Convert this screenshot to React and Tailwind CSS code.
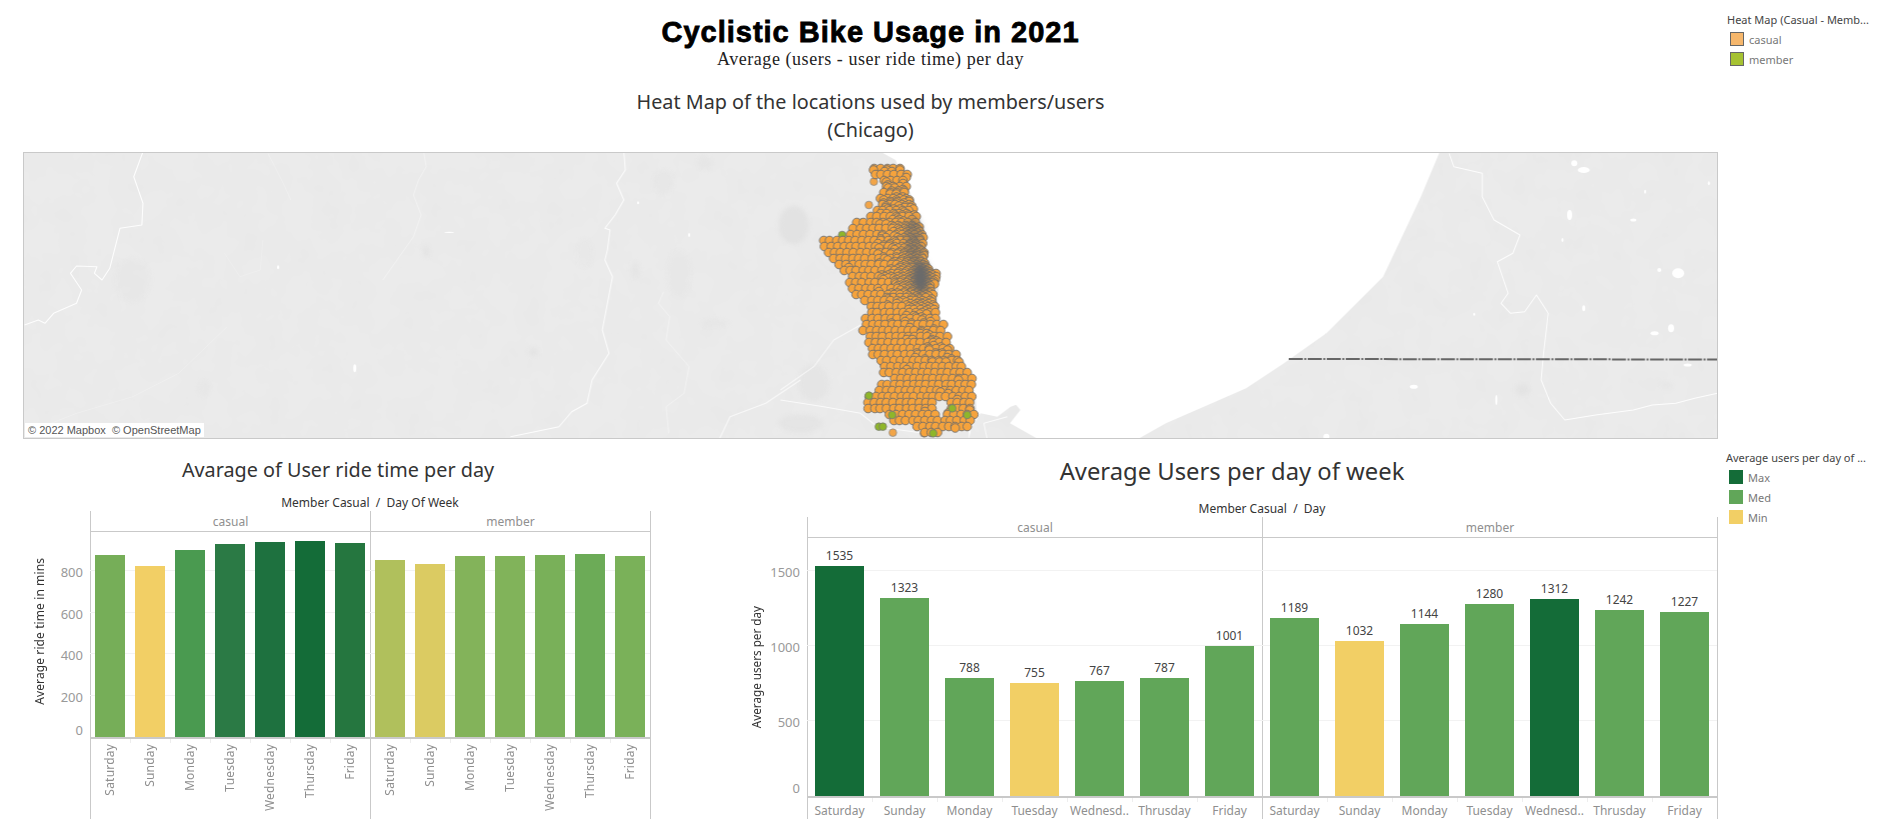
import React from "react";

const Z3 = (x, y) => [780 + x / 3, 150 + y / 3];
const Z7 = (x, y) => [x / 1.96, 140 + y / 3];
const Z8 = (x, y) => [1000 + x / 2.119, 140 + y / 3];
const pts = (f, a) => a.map(([x, y]) => f(x, y).map((n) => n.toFixed(1)).join(",")).join(" ");

const lake = [
  ...[[300, 5], [345, 30], [390, 130], [420, 230], [440, 340], [475, 400], [470, 470], [500, 560], [540, 640], [585, 740], [590, 800], [565, 835], [565, 868], [572, 835], [600, 790], [650, 800], [690, 770], [720, 760]].map(([x, y]) => Z3(x, y)),
  ...[[30, 790], [42, 810], [20, 850], [80, 898], [290, 898], [350, 850], [520, 745], [600, 670], [690, 580], [810, 410], [860, 260], [890, 170], [930, 35]].map(([x, y]) => Z8(x, y)),
];

const rivers = [
  [Z7, [[280, 35], [262, 110], [280, 190], [278, 255], [235, 265], [215, 385], [200, 420], [185, 400], [190, 380], [150, 378], [138, 400], [160, 450], [150, 490], [105, 520], [88, 550], [75, 540], [48, 555]], 1.1, 0.9],
  [Z7, [[1222, 35], [1225, 90], [1208, 130], [1222, 180], [1205, 225], [1185, 265], [1195, 270], [1190, 330], [1185, 360], [1200, 410], [1190, 490], [1180, 570], [1193, 640], [1160, 720], [1150, 790], [1120, 815], [1095, 860], [1000, 890]], 1, 0.9],
  [Z7, [[830, 35], [835, 80], [820, 120], [810, 165], [825, 225], [810, 290], [750, 420]], 0.7, 0.6],
  [Z7, [[525, 40], [555, 130], [570, 180]], 0.5, 0.5],
  [Z7, [[1300, 455], [1290, 490], [1312, 530], [1305, 600], [1350, 680], [1340, 760], [1305, 800], [1310, 880]], 0.7, 0.6],
  [Z7, [[445, 560], [350, 700], [260, 770], [150, 820], [100, 850]], 0.5, 0.45],
  [Z7, [[440, 340], [470, 410], [510, 390], [515, 300]], 0.5, 0.4],
  [Z7, [[1568, 720], [1500, 790], [1430, 830], [1410, 895]], 1.1, 0.7],
  [Z3, [[0, 720], [100, 650], [160, 570], [240, 525]], 1, 0.7],
  [Z3, [[0, 750], [130, 770], [240, 790], [290, 830], [430, 850]], 1, 0.75],
  [Z3, [[620, 868], [610, 820], [680, 800]], 1, 0.8],
  [Z8, [[950, 40], [960, 80], [1020, 100], [1020, 170], [1045, 240], [1100, 285], [1085, 340], [1052, 365], [1075, 460], [1060, 490], [1080, 520], [1110, 515], [1135, 465], [1160, 520], [1150, 640], [1145, 720], [1165, 790], [1195, 840], [1260, 825], [1340, 810], [1380, 795], [1430, 790], [1470, 775], [1518, 760]], 1, 0.9],
];

const spots = [
  [Z7, 545, 382, 1, 2], [Z7, 695, 685, 1.5, 4], [Z7, 1350, 285, 1, 2], [Z7, 880, 277, 5, 0.6], [Z7, 1250, 188, 1, 1.5],
  [Z8, 1205, 225, 2.5, 5], [Z8, 1235, 90, 6, 3], [Z8, 1215, 70, 3, 3], [Z8, 1435, 400, 6, 5], [Z8, 1395, 390, 2, 2],
  [Z8, 1385, 580, 4, 2], [Z8, 1420, 565, 3, 4], [Z8, 1235, 505, 1.5, 3], [Z8, 875, 740, 4, 2], [Z8, 1365, 155, 1, 2],
  [Z8, 1500, 130, 1, 2], [Z8, 1190, 300, 1, 2], [Z8, 1455, 675, 4, 1.5], [Z8, 1340, 240, 3, 1.5], [Z8, 1003, 523, 1, 1.5],
  [Z8, 690, 890, 3, 3], [Z8, 1050, 780, 1, 5],
];

const patches = [
  [Z3, 40, 225, 15, 19, 0.75], [Z7, 1300, 125, 10, 12, 0.35], [Z7, 1380, 70, 7, 7, 0.3], [Z7, 1245, 390, 4, 9, 0.4],
  [Z7, 400, 745, 6, 8, 0.25], [Z7, 1045, 635, 5, 4, 0.6], [Z7, 260, 420, 18, 22, 0.18], [Z7, 835, 335, 3, 6, 0.6],
  [Z7, 1400, 550, 14, 4, 0.25], [Z3, 100, 700, 15, 18, 0.5], [Z3, 60, 820, 22, 9, 0.5], [Z8, 1105, 750, 7, 6, 0.6],
  [Z8, 1410, 735, 6, 3, 0.35], [Z7, 1145, 340, 8, 15, 0.2], [Z7, 1330, 400, 12, 24, 0.18],
];

const shape = [[270, 45], [360, 45], [380, 70], [375, 130], [390, 150], [405, 190], [405, 225], [430, 240], [430, 300], [435, 350], [470, 370], [465, 400], [450, 420], [465, 470], [470, 500], [495, 530], [500, 580], [525, 610], [570, 680], [580, 740], [580, 810], [570, 840], [480, 840], [470, 855], [420, 855], [400, 825], [345, 825], [320, 790], [260, 790], [255, 750], [285, 710], [340, 680], [325, 670], [300, 670], [298, 640], [260, 610], [245, 550], [245, 510], [260, 460], [210, 440], [200, 370], [160, 350], [150, 320], [120, 300], [120, 270], [180, 265], [210, 235], [225, 215], [280, 195], [290, 165], [300, 130], [300, 90], [270, 90]].map(([x, y]) => Z3(x, y));

function inside(x, y) {
  let c = false;
  for (let i = 0, j = shape.length - 1; i < shape.length; j = i++) {
    const [xi, yi] = shape[i];
    const [xj, yj] = shape[j];
    if (yi > y !== yj > y && x < ((xj - xi) * (y - yi)) / (yj - yi) + xi) c = !c;
  }
  return c;
}

function buildDots() {
  let s = 20211;
  const rnd = () => {
    s = (s * 1664525 + 1013904223) >>> 0;
    return s / 4294967296;
  };
  const out = [];
  for (let i = 0, y = 168.5; y < 434; i++, y += 1.5) {
    const major = i % 4 === 0;
    for (let x = 815 + rnd() * 6; x < 980; x += 6.4) {
      if (!inside(x, y)) continue;
      const [zx, zy] = [(x - 780) * 3, (y - 150) * 3];
      if (zx > 462 && zx < 497 && zy > 745 && zy < 800) continue;
      const centre = zy * 0.07 + 365 + (zy > 400 ? (zy - 400) * 0.28 : 0);
      const d = Math.exp(-((zx - centre) ** 2) / (2 * 48 * 48));
      const band = zy < 140 ? 0.35 : zy < 480 ? 1 : zy < 640 ? 0.4 : 0.08;
      const near = Math.exp(-((zx - 415) ** 2 + (zy - 360) ** 2) / (2 * 55 * 55));
      if (major || rnd() < d * band * 0.7 + near) {
        out.push([x + rnd() * 1.4, y, 4.3]);
      }
    }
  }
  return out;
}

const dots = buildDots();
const greens = [[265, 737], [335, 795], [295, 830], [307, 830], [458, 850], [560, 795], [515, 775]].map(([x, y]) => Z3(x, y));
const greensBehind = [[243, 218], [185, 255]].map(([x, y]) => Z3(x, y));
const extras = [[337, 848], [265, 165], [280, 95], [430, 850], [310, 645], [310, 668]].map(([x, y]) => Z3(x, y));

function MapDrawing() {
  return (
    <svg viewBox="24 153 1692 285" preserveAspectRatio="none" className="block w-full h-full">
      <defs>
        <filter id="mottle" x="0" y="0" width="100%" height="100%">
          <feTurbulence type="fractalNoise" baseFrequency="0.035" numOctaves="3" seed="4" />
          <feColorMatrix values="0 0 0 0 0.78  0 0 0 0 0.78  0 0 0 0 0.78  0.6 0 0 0 -0.2" />
        </filter>
      </defs>
      <rect x="24" y="153" width="1692" height="285" fill="#ebebeb" />
      <rect x="24" y="153" width="1692" height="285" filter="url(#mottle)" />
      <g className="blur-[2px]">
        {patches.map(([f, x, y, rx, ry, o], i) => {
          const [cx, cy] = f(x, y);
          return <ellipse key={i} cx={cx} cy={cy} rx={rx} ry={ry} fill="#dfdfdf" opacity={o} />;
        })}
      </g>
      <g className="blur-[0.5px]">
        {rivers.map(([f, a, w, o], i) => (
          <polyline key={i} points={pts(f, a)} fill="none" stroke="#ffffff" strokeWidth={w} strokeLinejoin="round" opacity={o} />
        ))}
        {spots.map(([f, x, y, rx, ry], i) => {
          const [cx, cy] = f(x, y);
          return <ellipse key={i} cx={cx} cy={cy} rx={rx} ry={ry} fill="#ffffff" />;
        })}
      </g>
      <polygon points={lake.map((p) => p.map((n) => n.toFixed(1)).join(",")).join(" ")} fill="#ffffff" />
      <line x1="1288" y1="359" x2="1717" y2="359.5" stroke="#666666" strokeWidth="2" strokeDasharray="14 1.5 2 1.5" className="blur-[0.3px]" />
      <g className="blur-[0.45px]">
        {greensBehind.map(([x, y], i) => (
          <circle key={i} cx={x} cy={y} r="3.8" fill="#8fb62a" stroke="#777777" strokeWidth="0.8" />
        ))}
        {extras.map(([x, y], i) => (
          <circle key={i} cx={x} cy={y} r="3.8" fill="#f2a548" stroke="#8a8a8a" strokeWidth="0.8" />
        ))}
        {dots.map(([x, y, r], i) => (
          <circle key={i} cx={x.toFixed(1)} cy={y.toFixed(1)} r={r} fill="#f6a33c" stroke="#6c6c6c" strokeWidth="0.9" />
        ))}
        {greens.map(([x, y], i) => (
          <circle key={i} cx={x} cy={y} r="3.8" fill="#8fb62a" stroke="#777777" strokeWidth="0.8" />
        ))}
      </g>
      <g className="blur-[3px]">
        <ellipse cx="920" cy="277" rx="9" ry="16" fill="#6a6a6a" />
        <ellipse cx="913" cy="240" rx="8" ry="24" fill="#6a6a6a" opacity="0.55" />
      </g>
    </svg>
  );
}

const DAYS = ["Saturday", "Sunday", "Monday", "Tuesday", "Wednesday", "Thursday", "Friday"];
const LINE = "border-[#c9c9c9]";

function Panel({ name, bars, plotH, cellW, width, last, grid, renderLabel, labelArea }) {
  return (
    <div className={`flex flex-col border-l ${LINE} ${last ? "border-r" : ""}`} style={{ width }}>
      <div className={`h-[21px] shrink-0 border-b ${LINE} pt-[2px] flex items-center justify-center text-[12px] leading-none text-[#8f8f8f]`}>{name}</div>
      <div className="relative -ml-px" style={{ height: plotH, width: cellW * 7 }}>
        {grid.map((b) => (
          <div key={b} className="absolute left-0 right-0 h-px bg-[#f2f2f2]" style={{ bottom: b }} />
        ))}
        <div className="relative flex h-full items-end">
          {bars.map((b, i) => (
            <div key={i} className="flex flex-col items-center justify-end h-full" style={{ width: cellW }}>
              {renderLabel(b)}
              <div className="w-full" style={{ height: b.h, backgroundColor: b.c, width: b.w }} />
            </div>
          ))}
        </div>
      </div>
      <div className={`h-[2px] -ml-px bg-[#c9c9c9]`} style={{ width: cellW * 7 + (last ? 0 : 1) }} />
      {labelArea}
    </div>
  );
}

function Ticks({ ticks, height, title, offset, titleClass, shift }) {
  return (
    <div className="flex shrink-0" style={{ width: offset + 60 }}>
      <div style={{ width: offset }} />
      <div className="w-[60px] flex pt-[21px]">
        <div className="w-[20px] flex items-center justify-center" style={{ height }}>
          <span className={`[writing-mode:vertical-rl] rotate-180 whitespace-nowrap text-[#333333] ${titleClass}`}>{title}</span>
        </div>
        <div className="relative w-[40px]" style={{ height }}>
          {ticks.map(([label, b]) => (
            <span key={label} className="absolute right-[7px] translate-y-1/2 text-[13px] leading-none text-[#999999]" style={{ bottom: label === 0 ? b + 8 : b + shift }}>
              {label}
            </span>
          ))}
        </div>
      </div>
    </div>
  );
}

function SideLabels({ cellW }) {
  return (
    <div className="flex items-start -ml-px">
      {DAYS.map((d, i) => (
        <div key={d} className="relative flex items-start justify-center pt-[5px]" style={{ width: cellW }}>
          {i > 0 && <span className="absolute left-0 top-0 h-[4px] w-px bg-[#eeeeee]" />}
          <span className="[writing-mode:vertical-rl] rotate-180 text-[12px] leading-none tracking-[0.2px] text-[#8f8f8f] whitespace-nowrap">{d}</span>
        </div>
      ))}
    </div>
  );
}

function FlatLabels({ cellW }) {
  const names = ["Saturday", "Sunday", "Monday", "Tuesday", "Wednesd..", "Thrusday", "Friday"];
  return (
    <div className="flex -ml-px">
      {names.map((d, i) => (
        <div key={d} className="relative flex justify-center pt-[5px]" style={{ width: cellW }}>
          {i > 0 && <span className="absolute left-0 top-0 h-[4px] w-px bg-[#eeeeee]" />}
          <span className="text-[12px] leading-[16px] text-[#8f8f8f] whitespace-nowrap">{d}</span>
        </div>
      ))}
    </div>
  );
}

const leftCasual = [[182, "#76ae58"], [171, "#f2cf65"], [187, "#4a9a50"], [193, "#2b7a45"], [195, "#1e713f"], [196, "#146c38"], [194, "#25763f"]];
const leftMember = [[177, "#b0c05c"], [173, "#dbcb62"], [181, "#83b35a"], [181, "#81b35a"], [182, "#79b059"], [183, "#6cab57"], [181, "#7ab159"]];
const toLeft = (a) => a.map(([h, c]) => ({ h, c, w: 30 }));

const MED = "#61a659";
const MAX = "#146c38";
const MIN = "#f2cf65";
const rightCasual = [[1535, MAX], [1323, MED], [788, MED], [755, MIN], [767, MED], [787, MED], [1001, MED]];
const rightMember = [[1189, MED], [1032, MIN], [1144, MED], [1280, MED], [1312, MAX], [1242, MED], [1227, MED]];
const toRight = (a) => a.map(([v, c]) => ({ v, c, h: v * 0.15, w: 49 }));

const noLabel = () => null;
const valueLabel = (b) => (
  <span className="mb-[3px] text-[12px] leading-[14px] text-[#444444]">{b.v}</span>
);

function LeftChart() {
  const grid = [41.4, 82.8, 124.2, 165.6];
  const ticks = [[800, 165.6], [600, 124.2], [400, 82.8], [200, 41.4], [0, 0]];
  return (
    <div className="w-[676px] shrink-0 flex flex-col">
      <h2 className="mt-[18px] h-[24px] text-center text-[19.8px] leading-[24px] text-[#333333]">Avarage of User ride time per day</h2>
      <div className="mt-[12px] ml-[90px] w-[560px] h-[17px] text-center text-[12px] leading-[17px] text-[#333333]">Member Casual &nbsp;/&nbsp; Day Of Week</div>
      <div className="flex h-[308px]">
        <Ticks ticks={ticks} height={206} shift={0} title="Average ride time in mins" offset={30} titleClass="mb-[8px] text-[12px] tracking-[0.1px] leading-none" />
        <Panel name="casual" bars={toLeft(leftCasual)} plotH={205} cellW={40} width={280} grid={grid} renderLabel={noLabel} labelArea={<SideLabels cellW={40} />} />
        <Panel name="member" bars={toLeft(leftMember)} plotH={205} cellW={40} width={281} last grid={grid} renderLabel={noLabel} labelArea={<SideLabels cellW={40} />} />
      </div>
    </div>
  );
}

function RightChart() {
  const grid = [75, 150, 225];
  const ticks = [[1500, 225], [1000, 150], [500, 75], [0, 0]];
  return (
    <div className="w-[1042px] shrink-0 flex flex-col">
      <h2 className="mt-[16px] h-[30px] pl-[70px] text-center text-[23.8px] leading-[30px] text-[#333333]">Average Users per day of week</h2>
      <div className="mt-[14px] ml-[131px] w-[910px] h-[17px] text-center text-[12px] leading-[17px] text-[#333333]">Member Casual &nbsp;/&nbsp; Day</div>
      <div className="flex h-[302px]">
        <Ticks ticks={ticks} height={258} shift={-1} title="Average users per day" offset={71} titleClass="text-[11.7px] leading-none" />
        <Panel name="casual" bars={toRight(rightCasual)} plotH={258} cellW={65} width={455} grid={grid} renderLabel={valueLabel} labelArea={<FlatLabels cellW={65} />} />
        <Panel name="member" bars={toRight(rightMember)} plotH={258} cellW={65} width={456} last grid={grid} renderLabel={valueLabel} labelArea={<FlatLabels cellW={65} />} />
      </div>
    </div>
  );
}

function Legend({ title, items, outlined }) {
  return (
    <div className="flex flex-col">
      <div className="text-[11px] leading-[14px] text-[#444444] whitespace-nowrap">{title}</div>
      <div className="mt-[5px] flex flex-col gap-[6px] pl-[3px]">
        {items.map(([label, c]) => (
          <div key={label} className="flex items-center gap-[5px] h-[14px]">
            <span className={`w-[14px] h-[14px] shrink-0 ${outlined ? "border border-[#666666]" : ""}`} style={{ backgroundColor: c }} />
            <span className="text-[11px] leading-none text-[#777777]">{label}</span>
          </div>
        ))}
      </div>
    </div>
  );
}

export default function App() {
  return (
    <div className="w-[1882px] h-[825px] overflow-hidden bg-white flex flex-col [font-family:'Noto_Sans',sans-serif]">
      <div className="flex h-[440px] shrink-0">
        <div className="w-[1718px] shrink-0 pl-[23px] flex flex-col">
          <h1 className="mt-[16px] h-[32px] text-center text-[29px] leading-[32px] tracking-[1px] font-bold text-black [font-family:'Liberation_Sans',sans-serif] [-webkit-text-stroke:0.8px_#000]">Cyclistic Bike Usage in 2021</h1>
          <div className="mt-[1px] h-[20px] text-center text-[18px] leading-[20px] tracking-[0.55px] text-[#222222] [font-family:'Liberation_Serif',serif]">Average (users - user ride time) per day</div>
          <h2 className="mt-[19px] text-center text-[19.8px] leading-[28px] text-[#333333]">
            Heat Map of the locations used by members/users
            <br />
            (Chicago)
          </h2>
          <div className={`relative mt-[8px] h-[287px] border ${LINE}`}>
            <MapDrawing />
            <div className="absolute left-[1px] bottom-[1px] h-[14px] bg-white px-[3px] text-[11px] leading-[14px] text-[#555555] whitespace-nowrap [font-family:'Liberation_Sans',sans-serif]">© 2022 Mapbox &nbsp;© OpenStreetMap</div>
          </div>
        </div>
        <div className="pl-[9px] pt-[13px]">
          <Legend title="Heat Map (Casual - Memb..." outlined items={[["casual", "#f6b76c"], ["member", "#a6c232"]]} />
        </div>
      </div>
      <div className="flex">
        <LeftChart />
        <RightChart />
        <div className="pl-[8px] pt-[11px]">
          <Legend title="Average users per day of ..." items={[["Max", MAX], ["Med", MED], ["Min", MIN]]} />
        </div>
      </div>
    </div>
  );
}
